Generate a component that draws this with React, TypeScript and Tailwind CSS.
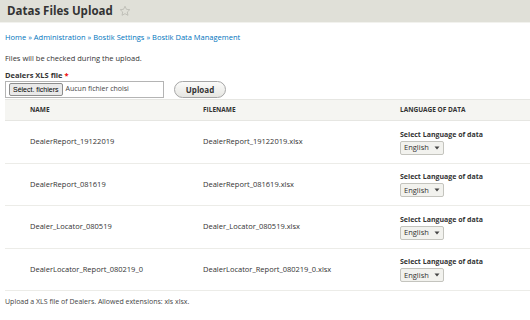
import React from "react";

const rows = [
  { name: "DealerReport_19122019", file: "DealerReport_19122019.xlsx" },
  { name: "DealerReport_081619", file: "DealerReport_081619.xlsx" },
  { name: "Dealer_Locator_080519", file: "Dealer_Locator_080519.xlsx" },
  { name: "DealerLocator_Report_080219_0", file: "DealerLocator_Report_080219_0.xlsx" },
];

function Star() {
  return (
    <svg width="12" height="12" viewBox="0 0 24 24" fill="none" stroke="#b8b8b0" strokeWidth="1.6" strokeLinejoin="round">
      <path d="M12 2.5l2.9 6.1 6.6.8-4.9 4.6 1.3 6.6L12 17.3l-5.9 3.3 1.3-6.6-4.9-4.6 6.6-.8z" />
    </svg>
  );
}

export default function App() {
  return (
    <div className="w-[530px] h-[320px] overflow-hidden bg-white text-[#333] font-['Open_Sans',sans-serif]">
      {/* Title bar */}
      <div className="h-[23px] bg-[#e0e0d8] border-b border-[#f2f2ee] flex items-center pl-[7px] gap-[6px]">
        <h1 className="text-[11.5px] font-bold text-[#333] leading-none">Datas Files Upload</h1>
        <Star />
      </div>

      <div className="pl-[5px]">
        {/* Breadcrumbs */}
        <div className="mt-[9px] text-[7.5px] leading-[10px] text-[#0074bd]">
          Home » Administration » Bostik Settings » Bostik Data Management
        </div>

        <p className="mt-[11px] text-[7.5px] leading-[10px]">Files will be checked during the upload.</p>

        <div className="mt-[7px] text-[7.5px] leading-[10px] font-bold">
          Dealers XLS file <span className="text-[#e00]">*</span>
        </div>

        <div className="mt-[1px] flex items-center gap-[10px]">
          <div className="w-[159px] h-[17px] border border-[#b4b4b4] flex items-center pl-[3px] gap-[3px]">
            <div className="h-[13px] px-[3px] bg-[#e9e9e9] border border-[#8d8d8d] rounded-[2px] text-[7px] leading-[11px] font-['Liberation_Sans',sans-serif] text-black">
              Sélect. fichiers
            </div>
            <span className="text-[7px] text-[#444]">Aucun fichier choisi</span>
          </div>
          <div className="w-[52px] h-[17px] rounded-full border border-[#a6a6a6] bg-gradient-to-b from-[#fbfbfa] to-[#e6e6e2] flex items-center justify-center text-[8px] font-bold text-[#333]">
            Upload
          </div>
        </div>

        {/* Table */}
        <div className="mt-[1px] w-[525px]">
          <div className="h-[22px] bg-[#f5f5f2] border-t border-[#e6e6e2] border-b border-[#c8c8c4] flex items-center text-[6.5px] font-bold uppercase text-[#333]">
            <div className="w-[198px] pl-[25px]">Name</div>
            <div className="w-[197px]">Filename</div>
            <div>Language of data</div>
          </div>
          {rows.map((r) => (
            <div key={r.name} className="h-[42.5px] border-b border-[#ecece8] flex items-center text-[7.5px]">
              <div className="w-[198px] pl-[25px]">{r.name}</div>
              <div className="w-[197px]">{r.file}</div>
              <div className="flex flex-col pt-[1px]">
                <span className="font-bold text-[7px] leading-[10px]">Select Language of data</span>
                <div className="mt-[1px] w-[44px] h-[14px] bg-[#f2f2ee] border border-[#c4c4be] rounded-[2px] flex items-center pl-[3px] gap-[5px] text-[7.5px]">
                  English
                  <svg width="6" height="4" viewBox="0 0 6 4"><path d="M0.5 0.5h5L3 3.5z" fill="#444" /></svg>
                </div>
              </div>
            </div>
          ))}
        </div>

        <p className="mt-[6px] text-[7px] leading-[10px] text-[#444]">
          Upload a XLS file of Dealers. Allowed extensions: xls xlsx.
        </p>
      </div>
    </div>
  );
}
